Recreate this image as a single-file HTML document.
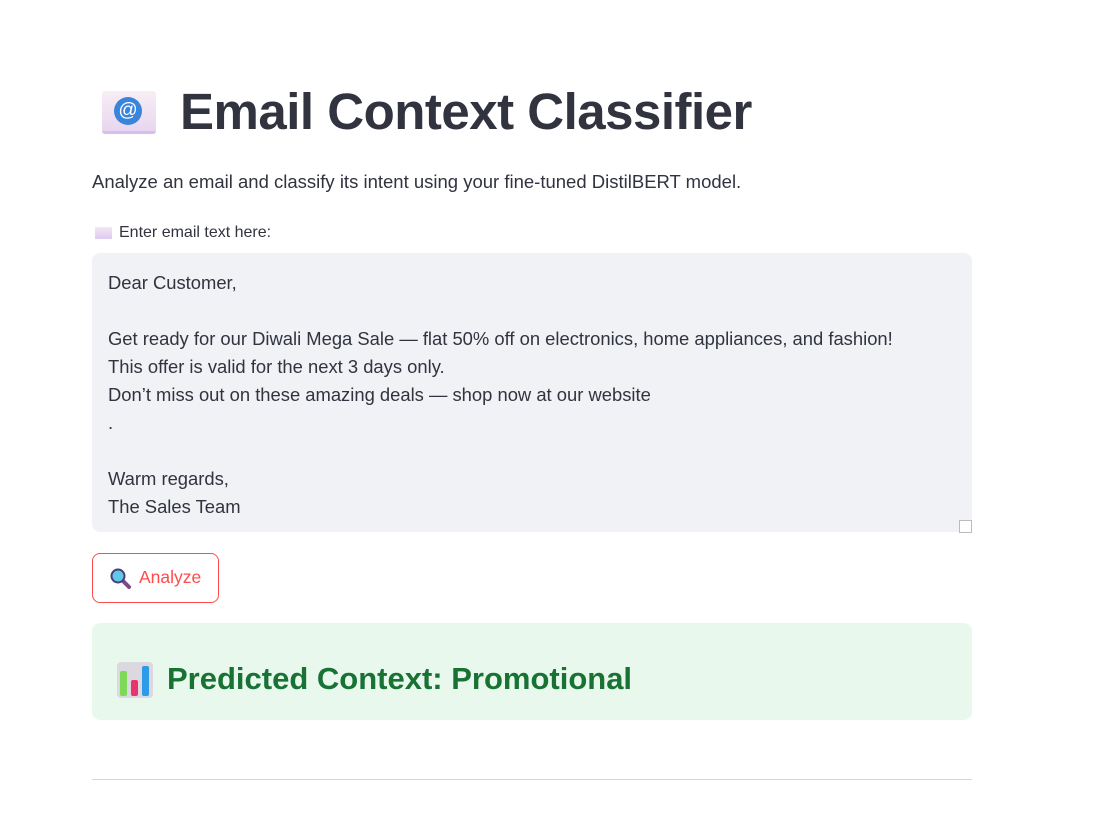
<!DOCTYPE html>
<html><head><meta charset="utf-8"><style>
body{margin:0;background:#fff;font-family:"Liberation Sans",sans-serif;color:#31333f;width:1107px;height:820px;overflow:hidden;position:relative}
.a{position:absolute}
h1{position:absolute;left:180px;top:82px;margin:0;font-size:51px;font-weight:bold;letter-spacing:-0.5px;color:#31333f;line-height:60px}
.ta{left:92px;top:253px;width:880px;height:279px;background:#f0f2f6;border-radius:8px}
.ta div{position:absolute;left:16px;top:16px;font-size:18.4px;line-height:28px;white-space:pre;color:#31333f}
.btn{left:92px;top:553px;width:125px;height:48px;border:1px solid #ff4b4b;border-radius:8px;color:#ff4b4b;font-size:17.5px}
.ok{left:92px;top:623px;width:880px;height:97px;background:#e8f8ed;border-radius:8px}
.ok span{position:absolute;left:75px;top:38px;font-size:31px;font-weight:bold;color:#177233}
</style></head><body>
<div class="a" style="left:102px;top:91px;width:54px;height:40px;background:linear-gradient(#f7eef5,#e8d6ef);border-radius:3px;border-bottom:3px solid #d7bdf0"></div>
<div class="a" style="left:114px;top:97px;width:28px;height:28px;border-radius:50%;background:#3a84dc;color:#fff;font-size:19px;text-align:center;line-height:27px">@</div>
<h1>Email Context Classifier</h1>
<div class="a" style="left:92px;top:171px;font-size:18.5px">Analyze an email and classify its intent using your fine-tuned DistilBERT model.</div>
<div class="a" style="left:95px;top:227px;width:17px;height:12px;background:linear-gradient(#f3e8f3,#dccaf0)"></div>
<div class="a" style="left:119px;top:224px;font-size:16px">Enter email text here:</div>
<div class="a ta"><div>Dear Customer,

Get ready for our Diwali Mega Sale — flat 50% off on electronics, home appliances, and fashion!
This offer is valid for the next 3 days only.
Don’t miss out on these amazing deals — shop now at our website
.

Warm regards,
The Sales Team</div></div>
<div class="a" style="left:959px;top:520px;width:11px;height:11px;border:1px solid #bbb;background:#fff"></div>
<div class="a btn"><svg class="a" style="left:17px;top:14px" width="22" height="22" viewBox="0 0 22 22"><line x1="12" y1="12" x2="19" y2="19" stroke="#7b4a8c" stroke-width="4" stroke-linecap="round"/><circle cx="8" cy="8" r="6.5" fill="#5fc9e6" stroke="#4a3c7a" stroke-width="2"/></svg><span class="a" style="left:46px;top:13px">Analyze</span></div>
<div class="a ok">
<svg class="a" style="left:25px;top:39px" width="36" height="36" viewBox="0 0 36 36"><rect width="36" height="36" rx="4" fill="#dcd8e0"/><rect x="3" y="9" width="7" height="25" rx="2" fill="#7ed957"/><rect x="14" y="18" width="7" height="16" rx="2" fill="#e8336e"/><rect x="25" y="4" width="7" height="30" rx="2" fill="#2e9be8"/></svg>
<span>Predicted Context: Promotional</span></div>
<div class="a" style="left:92px;top:779px;width:880px;height:1px;background:#d6d6d8"></div>
</body></html>
